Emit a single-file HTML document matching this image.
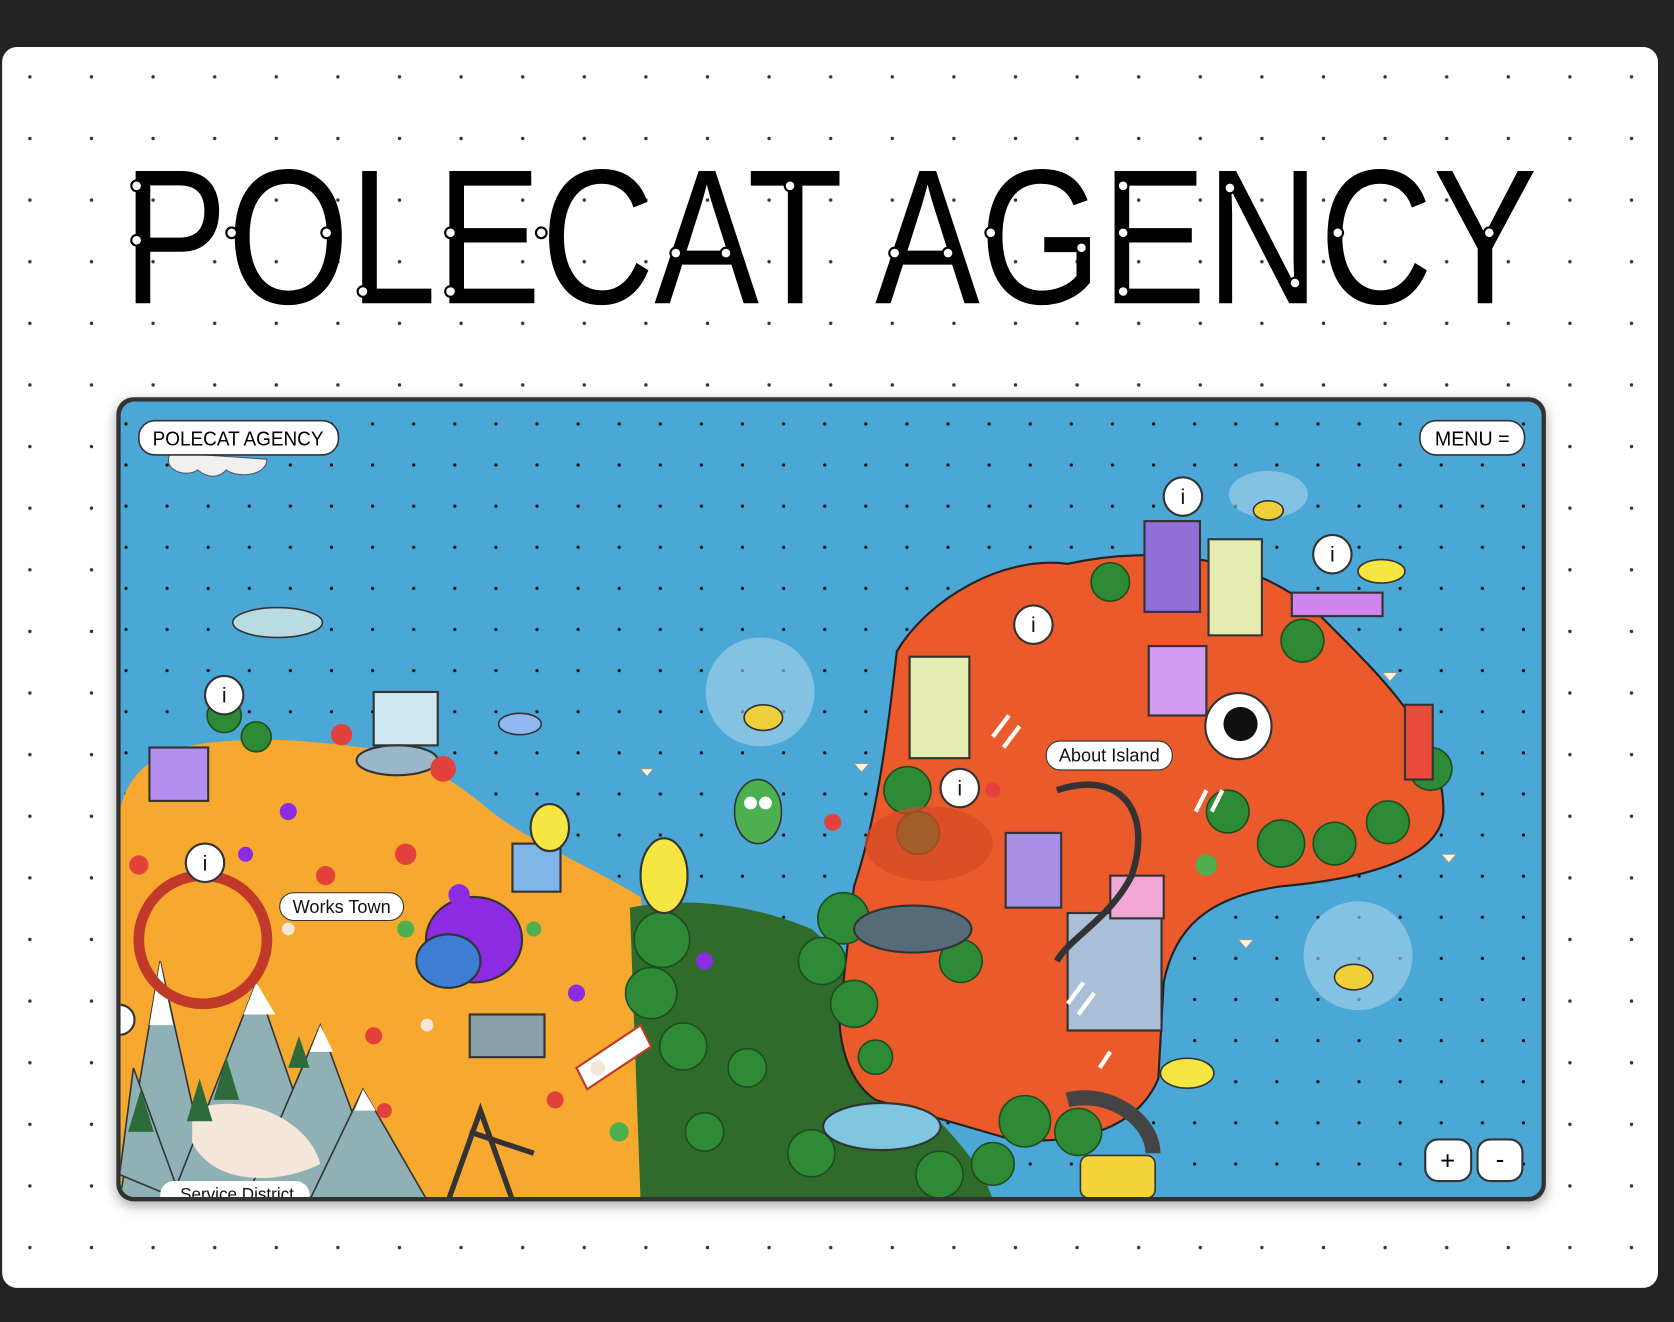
<!DOCTYPE html>
<html><head><meta charset="utf-8"><style>
html,body{margin:0;padding:0;background:#232323;width:1674px;height:1322px;overflow:hidden}
svg{display:block}
text{font-family:"Liberation Sans",Arial,sans-serif}
</style></head><body>
<svg width="1674" height="1322" viewBox="0 0 1568 1238" preserveAspectRatio="none" xmlns="http://www.w3.org/2000/svg">
<defs>
<pattern id="pd" x="28" y="72" width="57.7" height="57.7" patternUnits="userSpaceOnUse"><circle cx="0" cy="0" r="1.6" fill="#333"/><circle cx="57.7" cy="0" r="1.6" fill="#333"/><circle cx="0" cy="57.7" r="1.6" fill="#333"/><circle cx="57.7" cy="57.7" r="1.6" fill="#333"/></pattern>
<pattern id="md" x="118" y="397" width="38.5" height="38.5" patternUnits="userSpaceOnUse"><circle cx="0" cy="0" r="1.5" fill="#111"/><circle cx="38.5" cy="0" r="1.5" fill="#111"/><circle cx="0" cy="38.5" r="1.5" fill="#111"/><circle cx="38.5" cy="38.5" r="1.5" fill="#111"/></pattern>
<clipPath id="mc"><rect x="113" y="376" width="1331" height="745" rx="13"/></clipPath>
<filter id="sh" x="-10%" y="-10%" width="120%" height="120%"><feDropShadow dx="0" dy="4" stdDeviation="6" flood-opacity="0.35"/></filter>
</defs>
<rect x="2" y="44" width="1551" height="1162" rx="14" fill="#fff"/>
<rect x="2" y="44" width="1551" height="1162" rx="14" fill="url(#pd)"/>
<text x="115" y="284" font-size="180" textLength="1325" lengthAdjust="spacingAndGlyphs" fill="#000">POLECAT AGENCY</text>
<g fill="#fff" stroke="#000" stroke-width="2">
<circle cx="128" cy="174" r="5"/><circle cx="128" cy="225" r="5"/><circle cx="217" cy="218" r="5"/><circle cx="306" cy="218" r="5"/><circle cx="340" cy="273" r="5"/><circle cx="422" cy="218" r="5"/><circle cx="422" cy="273" r="5"/><circle cx="507" cy="218" r="5"/><circle cx="633" cy="237" r="5"/><circle cx="680" cy="237" r="5"/><circle cx="740" cy="174" r="5"/><circle cx="838" cy="237" r="5"/><circle cx="888" cy="237" r="5"/><circle cx="928" cy="218" r="5"/><circle cx="1013" cy="232" r="5"/><circle cx="1052" cy="174" r="5"/><circle cx="1052" cy="273" r="5"/><circle cx="1052" cy="218" r="5"/><circle cx="1152" cy="176" r="5"/><circle cx="1213" cy="265" r="5"/><circle cx="1253" cy="218" r="5"/><circle cx="1395" cy="218" r="5"/>
</g>
<g filter="url(#sh)"><rect x="109" y="372" width="1339" height="753" rx="16" fill="#333"/></g>
<g clip-path="url(#mc)">
<rect x="112" y="375" width="1333" height="747" fill="#4ba7d6"/>
<rect x="112" y="375" width="1333" height="747" fill="url(#md)"/>
<path d="M112,760 C120,720 150,700 200,695 C260,690 300,695 340,700 C380,705 420,725 460,760 C500,790 560,815 600,840 L640,1124 L112,1124 Z" fill="#f6a92e"/>
<path d="M590,850 C640,840 700,845 760,870 C800,900 810,980 860,1030 C890,1060 920,1090 930,1124 L600,1124 Z" fill="#2f6b2a"/>
<path d="M840,610 C870,560 940,520 1000,528 C1080,510 1180,520 1240,580 C1300,640 1352,690 1352,760 C1350,800 1290,822 1200,830 C1130,840 1100,870 1090,920 L1085,1010 C1065,1060 1000,1075 940,1065 L820,1030 C790,1010 780,960 790,920 L800,830 C820,770 830,700 840,610 Z" fill="#ea5a2b" stroke="#222" stroke-width="2"/>
<g fill="#2e8a35" stroke="#1c4d1f" stroke-width="1.5">
<circle cx="850" cy="740" r="22"/><circle cx="860" cy="780" r="20"/><circle cx="790" cy="860" r="24"/><circle cx="770" cy="900" r="22"/><circle cx="800" cy="940" r="22"/><circle cx="620" cy="880" r="26"/><circle cx="610" cy="930" r="24"/><circle cx="640" cy="980" r="22"/><circle cx="900" cy="900" r="20"/><circle cx="1150" cy="760" r="20"/><circle cx="1200" cy="790" r="22"/><circle cx="1250" cy="790" r="20"/><circle cx="1300" cy="770" r="20"/><circle cx="1340" cy="720" r="20"/><circle cx="1220" cy="600" r="20"/><circle cx="1040" cy="545" r="18"/><circle cx="960" cy="1050" r="24"/><circle cx="1010" cy="1060" r="22"/><circle cx="760" cy="1080" r="22"/><circle cx="880" cy="1100" r="22"/><circle cx="930" cy="1090" r="20"/><circle cx="700" cy="1000" r="18"/><circle cx="210" cy="670" r="16"/><circle cx="240" cy="690" r="14"/><circle cx="820" cy="990" r="16"/><circle cx="660" cy="1060" r="18"/>
</g>
<g fill="#8fb0b4" stroke="#333" stroke-width="1.5">
<path d="M112,1124 L150,900 L200,1124 Z"/><path d="M160,1124 L240,920 L310,1124 Z"/><path d="M230,1124 L300,960 L360,1124 Z"/><path d="M290,1124 L340,1020 L400,1124 Z"/><path d="M112,1100 L125,1000 L170,1124 Z"/>
</g>
<g fill="#fff"><path d="M140,960 L150,900 L162,960 Z"/><path d="M228,950 L240,920 L258,950 Z"/><path d="M290,985 L300,960 L312,985 Z"/><path d="M332,1040 L340,1020 L352,1040 Z"/></g>
<path d="M180,1040 C230,1020 290,1050 300,1090 C260,1110 200,1110 180,1070 Z" fill="#f4e6d8"/>
<g fill="#2e6b3a"><path d="M200,1030 L212,990 L224,1030 Z"/><path d="M175,1050 L187,1010 L199,1050 Z"/><path d="M120,1060 L132,1020 L144,1060 Z"/><path d="M270,1000 L280,970 L290,1000 Z"/></g>
<circle cx="190" cy="880" r="60" fill="none" stroke="#c0392b" stroke-width="10"/>
<rect x="852" y="615" width="56" height="95" fill="#e5ecb0" stroke="#333" stroke-width="2"/>
<rect x="1072" y="488" width="52" height="85" fill="#8f6fd8" stroke="#333" stroke-width="2"/>
<rect x="1132" y="505" width="50" height="90" fill="#e5ecb0" stroke="#333" stroke-width="2"/>
<rect x="1076" y="605" width="54" height="65" fill="#d19bf0" stroke="#333" stroke-width="2"/>
<rect x="942" y="780" width="52" height="70" fill="#a88fe6" stroke="#333" stroke-width="2"/>
<rect x="1000" y="855" width="88" height="110" fill="#a9bfd8" stroke="#333" stroke-width="2"/>
<rect x="1210" y="555" width="85" height="22" fill="#d084f0" stroke="#333" stroke-width="2"/>
<rect x="1316" y="660" width="26" height="70" fill="#e84b3c" stroke="#333" stroke-width="2"/>
<rect x="1040" y="820" width="50" height="40" fill="#f1a8d6" stroke="#333" stroke-width="2"/>
<g stroke="#fff" stroke-width="4"><path d="M930,690 L945,670 M940,700 L955,680 M1120,760 L1130,740 M1135,760 L1145,740 M1000,940 L1015,920 M1010,950 L1025,930 M1030,1000 L1040,985"/></g>
<ellipse cx="870" cy="790" rx="60" ry="35" fill="#d64a25" opacity="0.7"/>
<ellipse cx="855" cy="870" rx="55" ry="22" fill="#556b78" stroke="#333" stroke-width="2"/>
<path d="M990,740 C1050,720 1080,760 1060,820 C1040,860 1000,880 990,900" fill="none" stroke="#333" stroke-width="6"/>
<path d="M1000,1030 C1040,1020 1080,1050 1080,1080" fill="none" stroke="#444" stroke-width="14"/>
<ellipse cx="826" cy="1055" rx="55" ry="22" fill="#7fc7e0" stroke="#333" stroke-width="2"/>
<rect x="350" y="648" width="60" height="50" fill="#cfe8f2" stroke="#333" stroke-width="2"/>
<ellipse cx="372" cy="712" rx="38" ry="14" fill="#9ab7c9" stroke="#333" stroke-width="2"/>
<ellipse cx="444" cy="880" rx="45" ry="40" fill="#8b2be2" stroke="#333" stroke-width="2"/>
<rect x="140" y="700" width="55" height="50" fill="#b58ff0" stroke="#333" stroke-width="2"/>
<rect x="480" y="790" width="45" height="45" fill="#7fb6e8" stroke="#333" stroke-width="2"/>
<ellipse cx="515" cy="775" rx="18" ry="22" fill="#f5e642" stroke="#333" stroke-width="2"/>
<ellipse cx="622" cy="820" rx="22" ry="35" fill="#f5e642" stroke="#333" stroke-width="2"/>
<rect x="440" y="950" width="70" height="40" fill="#8aa0a8" stroke="#333" stroke-width="2"/>
<path d="M420,1124 L450,1040 L480,1124 M440,1060 L500,1080" stroke="#333" stroke-width="5" fill="none"/>
<ellipse cx="420" cy="900" rx="30" ry="25" fill="#3e7fd6" stroke="#333" stroke-width="2"/>
<path d="M540,1000 L600,960 L610,980 L550,1020 Z" fill="#fff" stroke="#c0392b" stroke-width="2"/>
<g fill="#e2423b"><circle cx="320" cy="688" r="10"/><circle cx="415" cy="720" r="12"/><circle cx="380" cy="800" r="10"/><circle cx="305" cy="820" r="9"/><circle cx="350" cy="970" r="8"/><circle cx="780" cy="770" r="8"/><circle cx="930" cy="740" r="7"/><circle cx="130" cy="810" r="9"/><circle cx="520" cy="1030" r="8"/><circle cx="360" cy="1040" r="7"/></g>
<g fill="#8b2be2"><circle cx="430" cy="838" r="10"/><circle cx="540" cy="930" r="8"/><circle cx="660" cy="900" r="8"/><circle cx="230" cy="800" r="7"/><circle cx="270" cy="760" r="8"/></g>
<g fill="#4caf50"><circle cx="380" cy="870" r="8"/><circle cx="500" cy="870" r="7"/><circle cx="580" cy="1060" r="9"/><circle cx="1130" cy="810" r="10"/></g>
<g fill="#f4e6d8"><circle cx="400" cy="960" r="6"/><circle cx="270" cy="870" r="6"/><circle cx="560" cy="1000" r="7"/></g>
<circle cx="712" cy="648" r="51" fill="#a8d4ea" opacity="0.6"/>
<ellipse cx="715" cy="672" rx="18" ry="12" fill="#f0d03a" stroke="#333" stroke-width="1.5"/>
<circle cx="1272" cy="895" r="51" fill="#a8d4ea" opacity="0.6"/>
<ellipse cx="1268" cy="915" rx="18" ry="12" fill="#f0d03a" stroke="#333" stroke-width="1.5"/>
<ellipse cx="1188" cy="463" rx="37" ry="22" fill="#a8d4ea" opacity="0.6"/>
<ellipse cx="1188" cy="478" rx="14" ry="9" fill="#f0d03a" stroke="#333" stroke-width="1.5"/>
<ellipse cx="260" cy="583" rx="42" ry="14" fill="#b9dbe2" stroke="#333" stroke-width="1.5"/>
<ellipse cx="487" cy="678" rx="20" ry="10" fill="#8fb8f2" stroke="#333" stroke-width="1.5"/>
<g transform="translate(710,760)"><ellipse cx="0" cy="0" rx="22" ry="30" fill="#4caf50" stroke="#333" stroke-width="1.5"/><circle cx="-7" cy="-8" r="6" fill="#fff"/><circle cx="7" cy="-8" r="6" fill="#fff"/></g>
<ellipse cx="1112" cy="1005" rx="25" ry="14" fill="#f5e642" stroke="#333" stroke-width="1.5"/>
<ellipse cx="1294" cy="535" rx="22" ry="11" fill="#f5e642" stroke="#333" stroke-width="1.5"/>
<rect x="1012" y="1082" width="70" height="40" rx="8" fill="#f5d33a" stroke="#333" stroke-width="1.5"/>
<g fill="#fff6d8" stroke="#999" stroke-width="0.8"><path d="M600,720 l12,0 l-6,7 z"/><path d="M800,715 l14,0 l-7,8 z"/><path d="M1160,880 l14,0 l-7,8 z"/><path d="M1350,800 l14,0 l-7,8 z"/><path d="M1295,630 l14,0 l-7,8 z"/></g>
<circle cx="1160" cy="680" r="31" fill="#fff" stroke="#333" stroke-width="2"/>
<circle cx="1162" cy="678" r="16" fill="#111"/>
<g fill="#fff" stroke="#333" stroke-width="2">
<circle cx="210" cy="651" r="18"/><circle cx="192" cy="808" r="18"/><circle cx="1108" cy="465" r="18"/><circle cx="1248" cy="519" r="18"/><circle cx="968" cy="585" r="18"/><circle cx="899" cy="738" r="18"/><circle cx="112" cy="955" r="14"/>
</g>
<g font-size="20" text-anchor="middle" fill="#111">
<text x="210" y="658">i</text><text x="192" y="815">i</text><text x="1108" y="472">i</text><text x="1248" y="526">i</text><text x="968" y="592">i</text><text x="899" y="745">i</text>
</g>
<rect x="262" y="836" width="116" height="26" rx="13" fill="#fff" stroke="#333" stroke-width="1"/>
<text x="320" y="855" font-size="17" text-anchor="middle" fill="#111">Works Town</text>
<rect x="980" y="694" width="118" height="27" rx="13" fill="#fff" stroke="#333" stroke-width="1"/>
<text x="1039" y="713" font-size="17" text-anchor="middle" fill="#111">About Island</text>
<rect x="150" y="1106" width="140" height="26" rx="13" fill="#fff"/>
<text x="222" y="1124" font-size="16" text-anchor="middle" fill="#111">Service District</text>
</g>
<path d="M160,424 C150,440 175,448 185,440 C195,448 205,448 212,440 C222,448 250,446 250,430 Z" fill="#f0f0f0" stroke="#555" stroke-width="1"/>
<rect x="130" y="394" width="187" height="32" rx="15" fill="#fff" stroke="#333" stroke-width="1.5"/>
<text x="223" y="417" font-size="19" text-anchor="middle" textLength="160" lengthAdjust="spacingAndGlyphs" fill="#000">POLECAT AGENCY</text>
<rect x="1330" y="394" width="98" height="32" rx="15" fill="#fff" stroke="#333" stroke-width="1.5"/>
<text x="1379" y="417" font-size="19" text-anchor="middle" textLength="70" lengthAdjust="spacingAndGlyphs" fill="#000">MENU =</text>
<rect x="1335" y="1067" width="43" height="39" rx="12" fill="#fff" stroke="#333" stroke-width="2"/>
<text x="1356" y="1095" font-size="24" text-anchor="middle" fill="#000">+</text>
<rect x="1384" y="1067" width="42" height="39" rx="12" fill="#fff" stroke="#333" stroke-width="2"/>
<text x="1405" y="1094" font-size="24" text-anchor="middle" fill="#000">-</text>
</svg>
</body></html>
